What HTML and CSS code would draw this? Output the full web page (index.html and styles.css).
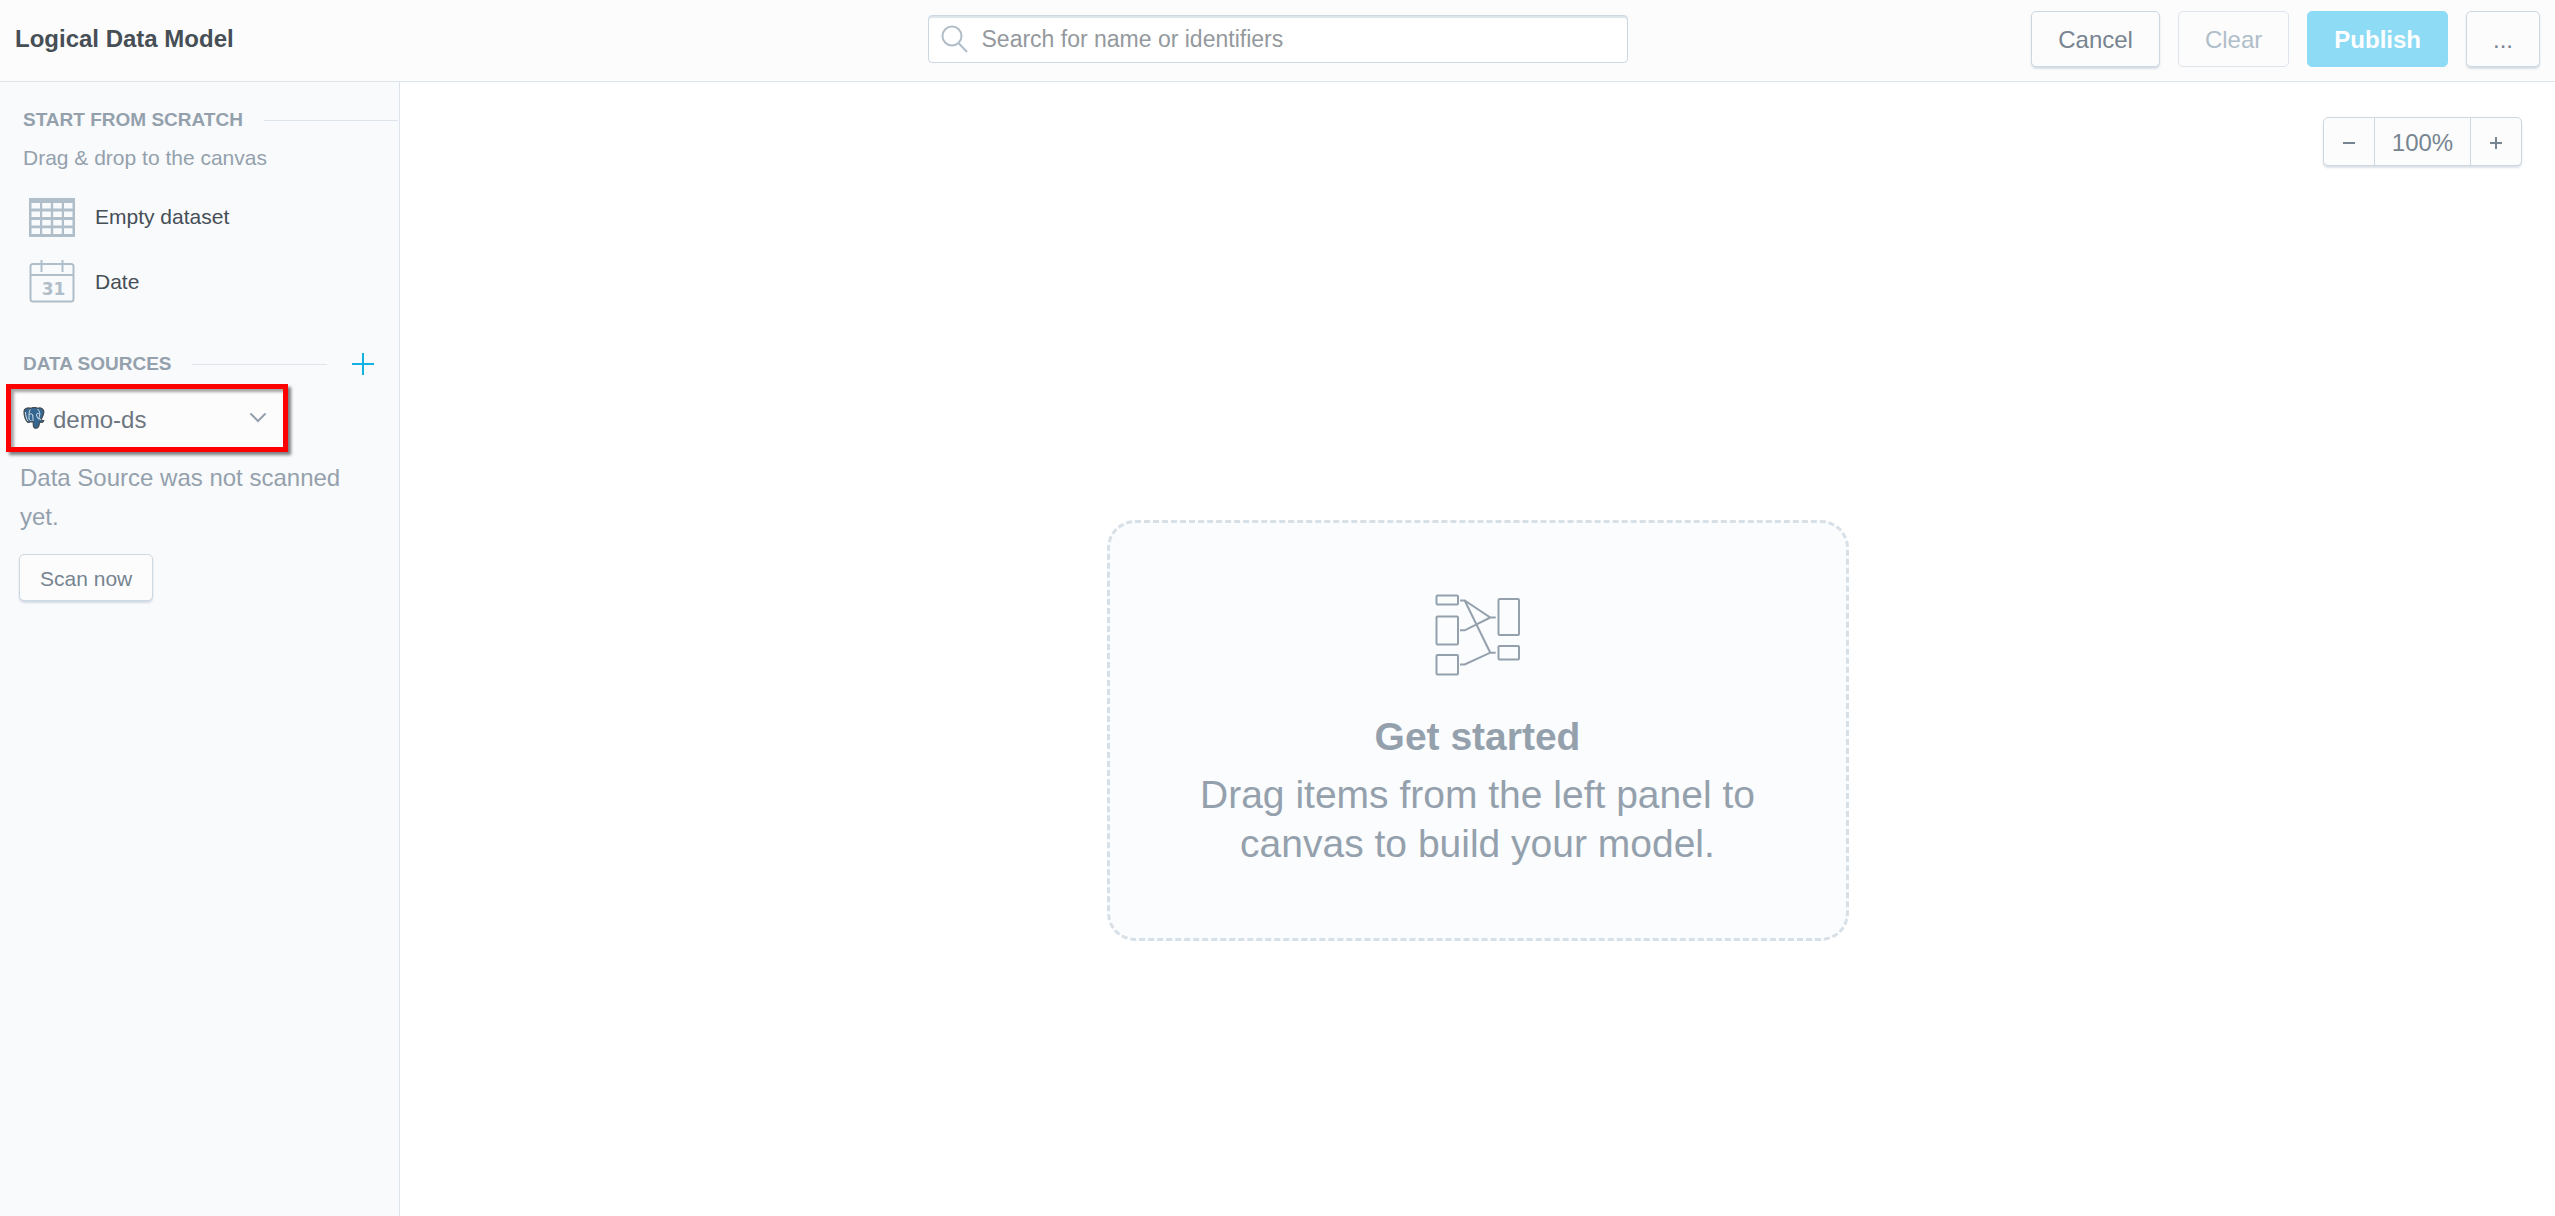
FILE: index.html
```html
<!DOCTYPE html>
<html lang="en">
<head>
<meta charset="utf-8">
<meta name="viewport" content="width=device-width, initial-scale=1">
<title>Logical Data Model</title>
<link rel="stylesheet" href="styles.css">
</head>
<body>
<header class="topbar">
  <h1 class="title">Logical Data Model</h1>
  <label class="search">
    <svg class="search-icon" width="28" height="28" viewBox="0 0 28 28" aria-hidden="true"><circle cx="11" cy="11" r="9.5"/><path d="M17.5 18 26 27"/></svg>
    <input class="search-input" type="search" placeholder="Search for name or identifiers" aria-label="Search for name or identifiers">
  </label>
  <div class="actions">
    <button class="button" type="button">Cancel</button>
    <button class="button" type="button" disabled>Clear</button>
    <button class="button button-primary" type="button">Publish</button>
    <button class="button" type="button" aria-label="More">...</button>
  </div>
</header>
<div class="workspace">
  <aside class="sidebar">
    <section>
      <div class="section-head"><h2 class="section-title">START FROM SCRATCH</h2><span class="rule"></span></div>
      <p class="hint">Drag &amp; drop to the canvas</p>
      <ul class="items">
        <li class="item">
          <svg width="46" height="43" viewBox="0 0 46 43" aria-hidden="true"><path class="fill" fill-rule="evenodd" d="M0 3h46v39H0zM2.500 8v5.500H11V8zM13.200 8v5.500h8.600V8zM24.200 8v5.500h8.600V8zM35 8v5.500h8.500V8zM2.500 16.500V22H11v-5.500zM13.200 16.500V22h8.600v-5.500zM24.200 16.500V22h8.600v-5.500zM35 16.500V22h8.500v-5.500zM2.500 25v5.500H11V25zM13.200 25v5.500h8.600V25zM24.200 25v5.500h8.600V25zM35 25v5.500h8.500V25zM2.500 33.200v5.800H11v-5.800zM13.200 33.200v5.800h8.600v-5.800zM24.200 33.200v5.800h8.600v-5.800zM35 33.200v5.800h8.500v-5.800z"/></svg>
          <span>Empty dataset</span>
        </li>
        <li class="item">
          <svg width="46" height="43" viewBox="0 0 46 43" aria-hidden="true"><g class="line"><rect x="1.500" y="4" width="43" height="37.500" rx="2.500"/><path d="M1.500 15h43M12.500 0v12M33.500 0v12"/></g><text class="day" x="24.500" y="34.500" text-anchor="middle">31</text></svg>
          <span>Date</span>
        </li>
      </ul>
    </section>
    <section class="sources">
      <div class="section-head">
        <h2 class="section-title">DATA SOURCES</h2><span class="rule"></span>
        <button class="add" type="button" aria-label="Add data source"><svg width="24" height="24" viewBox="0 0 24 24" aria-hidden="true"><path d="M12 1v22M1 12h22"/></svg></button>
      </div>
      <div class="source-picker">
        <svg width="22" height="22" viewBox="0 0 22 22" aria-hidden="true">
          <path fill="#336791" stroke="#454c52" stroke-width="1.200" d="M1 5C1 1 5 0.500 8 1.300 10 .3 13 .5 14.500 1.300 18 .2 21.300 2 20.800 5.500 20.500 8.500 19 11 17.800 13l3 .7c-.8 1.700-2.800 2-4.300 1.600-.4 2 0 5-2.500 5.700-2.700.7-3.800-1-3.700-3.200l-.2-3.400C8.500 15.300 6.500 14.500 5 15.500 2.700 14 1 9 1 5z"/>
          <path fill="none" stroke="#d9e4ec" stroke-width="1" d="M7.300 2.500C5.500 5 6.200 8 6 11c0 1.600 1 2.700 2.400 2.700M6.300 7.500c1.500-1.200 3.700-.8 3.500 1.500-.1 2 .7 3.300 0 5M14.500 2c2.300 2.300 3 5 1.500 8.500l1.700 2.700M15.800 6.500c-1.700-.6-2.800.5-2 2.700l2 3.300M2.500 5c0 3.500 1 7 2.500 9"/>
        </svg>
        <select class="source-select" aria-label="Data source"><option>demo-ds</option></select>
        <svg class="chevron" width="18" height="12" viewBox="0 0 18 12" aria-hidden="true"><path d="M2 2l7 7 7-7"/></svg>
      </div>
      <p class="status">Data Source was not scanned yet.</p>
      <button class="button button-small" type="button">Scan now</button>
    </section>
  </aside>
  <main class="canvas">
    <div class="zoom" role="group" aria-label="Zoom">
      <button class="zoom-button" type="button" aria-label="Zoom out"><svg width="14" height="14" viewBox="0 0 14 14" aria-hidden="true"><path d="M1 7h12"/></svg></button>
      <button class="zoom-button zoom-value" type="button">100%</button>
      <button class="zoom-button" type="button" aria-label="Zoom in"><svg width="14" height="14" viewBox="0 0 14 14" aria-hidden="true"><path d="M1 7h12M7 1v12"/></svg></button>
    </div>
    <div class="empty">
      <svg class="model-icon" width="85" height="82" viewBox="0 0 85 82" aria-hidden="true">
        <rect x="1.500" y="1.500" width="21.500" height="9" rx="1"/><rect x="1.500" y="22.500" width="21.500" height="28" rx="1"/><rect x="1.500" y="61" width="21.500" height="19.500" rx="1"/><rect x="63.500" y="5" width="20.500" height="36" rx="1"/><rect x="63.500" y="52" width="20.500" height="13.500" rx="1"/>
        <path d="M25 6.500H29.700L55.300 23.500H60.700M25 36.300H29.700L55.300 23.500M25 70.500H29.700L55.300 58.700H60.700M29.700 6.500 55.300 58.700"/>
      </svg>
      <h2 class="empty-title">Get started</h2>
      <p class="empty-text">Drag items from the left panel to canvas to build your model.</p>
    </div>
  </main>
</div>
</body>
</html>
```
FILE: styles.css
```css
* { box-sizing: border-box; }

body {
  margin: 0;
  min-height: 100vh;
  display: flex;
  flex-direction: column;
  background: #fff;
  color: #464e56;
  font-family: "Liberation Sans", Arial, sans-serif;
  font-size: 24px;
}

h1, h2, p, ul { margin: 0; padding: 0; }
button, input, select { font: inherit; color: inherit; margin: 0; }
svg { display: block; flex: none; }

.topbar {
  display: grid;
  grid-template-columns: 1fr minmax(0, 700px) 1fr;
  align-items: center;
  padding: 11px 15px 14px;
  background: #fcfcfc;
  border-bottom: 1px solid #dde4eb;
}
.title { font-size: 24px; line-height: 30px; }

.search {
  display: flex;
  align-items: center;
  gap: 13px;
  height: 48px;
  padding: 0 12px;
  background: #fff;
  border: 1px solid #ccd8e2;
  border-radius: 4px;
  box-shadow: inset 0 2px 1px #dde5ec;
}
.search-icon { fill: none; stroke: #b0beca; stroke-width: 2; }
.search-input {
  flex: 1;
  min-width: 0;
  padding: 0;
  border: 0;
  outline: 0;
  background: none;
  font-size: 23px;
  appearance: none;
}
.search-input::placeholder { color: #94999d; opacity: 1; }

.actions { display: flex; justify-content: flex-end; gap: 18px; }

.button {
  height: 56px;
  padding: 2px 26px 0;
  background: #fcfcfc;
  border: 1px solid #ccd8e2;
  border-radius: 5px;
  box-shadow: 0 2px 2px rgba(20, 56, 93, 0.15);
  color: #778491;
}
.button:disabled { color: #b0beca; border-color: #dde4eb; box-shadow: none; }
.button-primary {
  background: #8ddbf5;
  border-color: #8ddbf5;
  box-shadow: none;
  color: #fff;
  font-weight: bold;
}
.button-small { height: 47px; padding: 2px 20px 0; font-size: 21px; }

.workspace { flex: 1; display: flex; }

.sidebar {
  flex: none;
  width: 400px;
  padding: 26px 1px 40px 0;
  background: #f9fafc;
  border-right: 1px solid #dde4eb;
}
.section-head { display: flex; align-items: center; height: 24px; padding-left: 23px; }
.section-title { font-size: 19px; line-height: 24px; color: #94a1ad; white-space: nowrap; }
.rule { flex: 1; height: 1px; margin-left: 21px; background: #dde4eb; }
.hint { margin: 12px 0 12px 23px; font-size: 21px; line-height: 28px; color: #94a1ad; }

.items { list-style: none; }
.item {
  display: flex;
  align-items: center;
  gap: 20px;
  height: 65px;
  padding-left: 29px;
  font-size: 21px;
}
.fill { fill: #b0beca; }
.line { fill: none; stroke: #b0beca; stroke-width: 2; }
.day { fill: #b0beca; font-family: "DejaVu Sans", sans-serif; font-size: 17px; font-weight: bold; }

.sources { padding-top: 38px; }
.add { margin: 0 23px 0 24px; padding: 0; border: 0; background: none; }
.add svg { fill: none; stroke: #14b2e2; stroke-width: 2; }

.source-picker {
  display: flex;
  align-items: center;
  width: 282px;
  height: 68px;
  margin: 8px 0 6px 6px;
  padding: 0 16px 0 12px;
  background: #fcfcfc;
  border: 5px solid #f00;
  box-shadow: 3px 3px 3px rgba(0, 0, 0, 0.5), inset 3px 3px 3px rgba(0, 0, 0, 0.35);
}
.source-select {
  flex: 1;
  min-width: 0;
  height: 40px;
  padding: 2px 0 0 8px;
  border: 0;
  background: none;
  color: #6d7680;
  appearance: none;
}
.chevron { fill: none; stroke: #94a1ad; stroke-width: 2; stroke-linecap: round; }

.status { padding: 0 20px; line-height: 39px; color: #94a1ad; }
.sources .button-small { margin: 18px 0 0 19px; }

.canvas {
  flex: 1;
  min-width: 0;
  display: flex;
  flex-direction: column;
  align-items: center;
  padding: 35px 33px 40px;
}
.zoom {
  display: flex;
  align-self: flex-end;
  height: 49px;
  background: #fcfcfc;
  border: 1px solid #ccd8e2;
  border-radius: 5px;
  box-shadow: 0 2px 2px rgba(20, 56, 93, 0.15);
}
.zoom-button {
  display: flex;
  align-items: center;
  justify-content: center;
  width: 50px;
  padding: 2px 0 0;
  border: 0;
  background: none;
  color: #778491;
}
.zoom-button svg { fill: none; stroke: currentColor; stroke-width: 2; }
.zoom-value { width: 97px; padding-top: 3px; border: solid #ccd8e2; border-width: 0 1px; }

.empty {
  width: 100%;
  max-width: 742px;
  margin-top: 354px;
  padding: 71px 80px 70px;
  background: #fbfcfe;
  border: 3px dashed #d8e0e7;
  border-radius: 28px;
  color: #94a1ad;
  font-size: 39px;
  line-height: 49px;
  text-align: center;
}
.model-icon { margin: 0 auto 36px; fill: none; stroke: #94a1ad; stroke-width: 2; }
.empty-title { margin-bottom: 9px; font-size: 39px; }
```
